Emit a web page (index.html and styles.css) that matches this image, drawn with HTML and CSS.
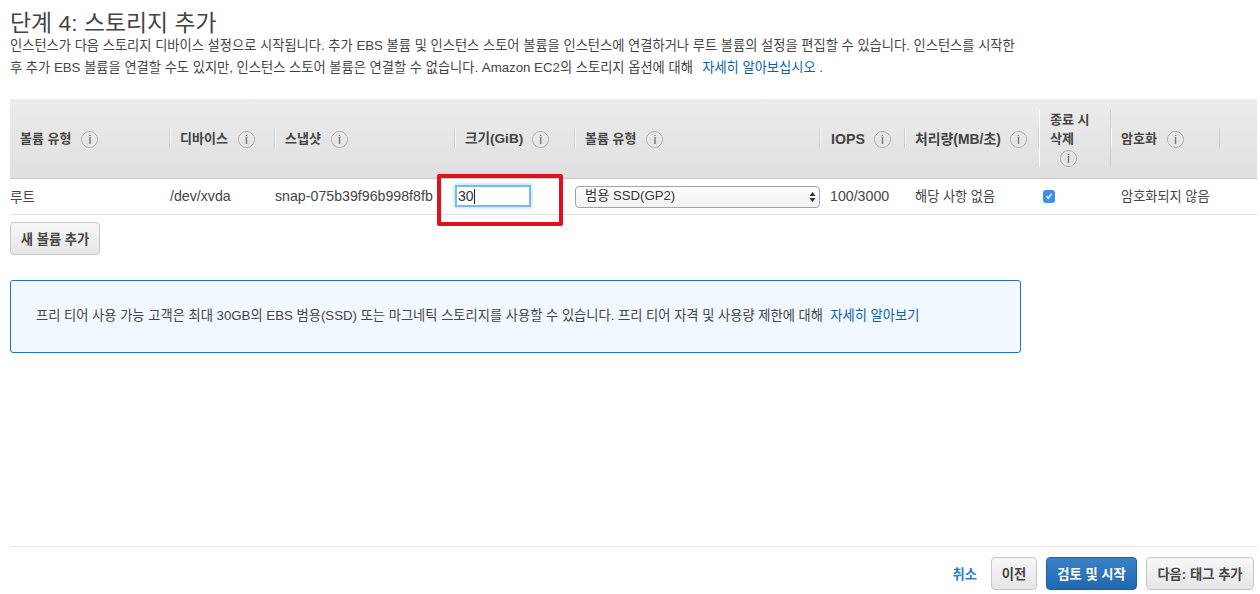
FILE: index.html
```html
<!DOCTYPE html>
<html lang="ko">
<head>
<meta charset="utf-8">
<title>단계 4: 스토리지 추가</title>
<link rel="stylesheet" href="styles.css">
</head>
<body>
<main class="page">
  <h1 class="title">단계 4: 스토리지 추가</h1>
  <p class="intro">인스턴스가 다음 스토리지 디바이스 설정으로 시작됩니다. 추가 EBS 볼륨 및 인스턴스 스토어 볼륨을 인스턴스에 연결하거나 루트 볼륨의 설정을 편집할 수 있습니다. 인스턴스를 시작한<br>후 추가 EBS 볼륨을 연결할 수도 있지만, 인스턴스 스토어 볼륨은 연결할 수 없습니다. Amazon EC2의 스토리지 옵션에 대해 &nbsp;<a class="intro-link" href="#">자세히 알아보십시오</a> .</p>

  <div class="table">
    <div class="thead">
      <div class="th c1"><span class="th-in">볼륨 유형<i class="info">i</i></span></div>
      <div class="th c2"><span class="th-in">디바이스<i class="info">i</i></span></div>
      <div class="th c3"><span class="th-in">스냅샷<i class="info">i</i></span></div>
      <div class="th c4"><span class="th-in">크기(GiB)<i class="info">i</i></span></div>
      <div class="th c5"><span class="th-in">볼륨 유형<i class="info">i</i></span></div>
      <div class="th c6"><span class="th-in">IOPS<i class="info">i</i></span></div>
      <div class="th c7"><span class="th-in">처리량(MB/초)<i class="info">i</i></span></div>
      <div class="th c8"><span class="th-in wrap">종료 시<br>삭제<br><i class="info center">i</i></span></div>
      <div class="th c9"><span class="th-in">암호화<i class="info">i</i></span></div>
      <div class="th c10"></div>
    </div>
    <div class="tr">
      <div class="td c1 root lift">루트</div>
      <div class="td c2 mono lift">/dev/xvda</div>
      <div class="td c3 mono lift">snap-075b39f96b998f8fb</div>
      <div class="td c4 size-cell">
        <div class="size-input">30<span class="caret"></span></div>
        <div class="highlight"></div>
      </div>
      <div class="td c5">
        <div class="select">범용 SSD(GP2)
          <svg class="updown" width="7" height="12" viewBox="0 0 7 12"><path d="M3.5 1 6.5 5H.5zM3.5 11 .5 7h6z" fill="#333"/></svg>
        </div>
      </div>
      <div class="td c6 mono lift">100/3000</div>
      <div class="td c7 lift">해당 사항 없음</div>
      <div class="td c8">
        <span class="check"><svg width="12" height="12" viewBox="0 0 12 12"><path d="M3.4 6.2 5.2 8.4 8.6 3.6" fill="none" stroke="#fff" stroke-width="1.3"/></svg></span>
      </div>
      <div class="td c9 lift">암호화되지 않음</div>
      <div class="td c10"></div>
    </div>
  </div>

  <button class="btn add" type="button">새 볼륨 추가</button>

  <div class="notice">프리 티어 사용 가능 고객은 최대 30GB의 EBS 범용(SSD) 또는 마그네틱 스토리지를 사용할 수 있습니다. 프리 티어 자격 및 사용량 제한에 대해 &nbsp;<a href="#">자세히 알아보기</a></div>

  <footer class="footer">
    <a class="cancel" href="#">취소</a>
    <button class="btn prev" type="button">이전</button>
    <button class="btn primary" type="button">검토 및 시작</button>
    <button class="btn next" type="button">다음: 태그 추가</button>
  </footer>
</main>
</body>
</html>
```
FILE: styles.css
```css
html, body { margin: 0; padding: 0; background: #fff; }
body {
  font-family: "Liberation Sans", "Noto Sans CJK KR", sans-serif;
  font-size: 13px;
  color: #444;
  overflow: hidden;
  height: 594px;
}
a { color: #0b5fa8; text-decoration: none; }
.page { width: 1247px; margin-left: 10px; margin-right: 3px; }
.title {
  margin: 0;
  padding-top: 10px;
  height: 25px;
  line-height: 27px;
  font-size: 22.9px;
  font-weight: 400;
  color: #444;
}
.intro {
  margin: 0;
  width: 1020px;
  height: 64px;
  font-size: 13.26px;
  line-height: 22px;
  color: #444;
  white-space: nowrap;
}
.intro-link { margin-left: 2px; }
.table { width: 1247px; }
.thead {
  display: flex;
  height: 79px;
  background: linear-gradient(#ececec, #dfdfdf);
  border-bottom: 1px solid #c9c9c9;
}
.tr {
  display: flex;
  height: 35px;
  border-bottom: 1px solid #e1e1e1;
  align-items: center;
}
.c1 { width: 160px; }
.c2 { width: 105px; }
.c3 { width: 180px; }
.c4 { width: 120px; }
.c5 { width: 245px; }
.c6 { width: 85px; }
.c7 { width: 134px; }
.c8 { width: 72px; }
.c9 { width: 109px; }
.c10 { width: 37px; }
.th {
  box-sizing: border-box;
  display: flex;
  align-items: center;
  font-size: 13px;
  font-weight: 700;
  color: #444;
  position: relative;
  white-space: nowrap;
  padding-left: 10px;
  padding-top: 1px;
}
.th-in { display: flex; align-items: center; line-height: 20px; }
.th-in.wrap { display: block; line-height: 19px; }
.th::after {
  content: "";
  position: absolute;
  right: 0;
  top: 29px;
  height: 20px;
  width: 1px;
  background: #cfcfcf;
  box-shadow: 1px 0 0 #f6f6f6;
}
.th.c4 { font-size: 13.6px; }
.th.c7 { font-size: 13.9px; }
.th.c6 { font-size: 14.2px; padding-left: 11px; }
.c7.th::after { box-shadow: none; }
.c8.th { padding-left: 11px; padding-top: 0; }
.c8.th::before {
  content: "";
  position: absolute;
  left: 0;
  top: 11px;
  height: 57px;
  width: 1px;
  background: #fbfbfb;
}
.c8.th::after { top: 11px; height: 57px; box-shadow: none; }
.c9.th::before {
  content: "";
  position: absolute;
  left: 0;
  top: 29px;
  height: 20px;
  width: 1px;
  background: #fbfbfb;
}
.c9.th::after { box-shadow: none; }
.c10.th::after { display: none; }
.info {
  box-sizing: border-box;
  display: inline-block;
  width: 17px;
  height: 17px;
  margin-left: 10px;
  border: 1px solid #a9a9a9;
  border-radius: 50%;
  font: 400 13px/15px "Liberation Sans", sans-serif;
  color: #666;
  text-align: center;
  box-shadow: inset 0 0 0 1px #f2f2f2;
}
.th.c6 .info, .th.c7 .info, .th.c4 .info { margin-left: 9px; }
.info.center { margin-left: 10px; vertical-align: middle; }
.td {
  box-sizing: border-box;
  font-size: 13.2px;
  color: #444;
  white-space: nowrap;
}
.td.lift { padding-bottom: 2px; }
.td.mono { font-size: 14.2px; }
.td.root { font-size: 13.5px; }
.td.c7, .td.c6, .td.c9 { padding-left: 10px; }
.td.c8 { padding-left: 4px; }
.size-cell { position: relative; height: 35px; }
.size-input {
  box-sizing: border-box;
  margin-top: 6px;
  width: 76px;
  height: 22px;
  border: 2px solid #7db8ee;
  box-shadow: 0 0 3px 1px #bcdcf9;
  padding-left: 1px;
  font-size: 14px;
  color: #333;
  display: flex;
  align-items: center;
}
.caret { width: 1px; height: 15px; background: #222; }
.highlight {
  position: absolute;
  left: -18px;
  top: -5px;
  width: 126px;
  height: 52px;
  box-sizing: border-box;
  border: 4px solid #e0101d;
  border-radius: 2px;
}
.select {
  box-sizing: border-box;
  position: relative;
  width: 245px;
  height: 22px;
  padding-left: 9px;
  line-height: 18px;
  font-size: 13.2px;
  border: 1px solid #a3a3a3;
  border-radius: 4px;
  background: linear-gradient(#fcfcfc, #f3f3f3);
  color: #333;
}
.updown { position: absolute; right: 3px; top: 4px; }
.check {
  display: block;
  width: 12px;
  height: 13px;
  border-radius: 3px;
  background: #3e8ef0;
}
.check svg { display: block; }
.btn {
  box-sizing: border-box;
  font-family: inherit;
  font-size: 13.3px;
  font-weight: 700;
  color: #444;
  height: 33px;
  border: 1px solid #c6c6c6;
  border-radius: 4px;
  background: linear-gradient(#f7f7f7, #e6e6e6);
  padding: 0;
}
.add { display: block; width: 90px; margin-top: 7px; }
.notice {
  box-sizing: border-box;
  margin-top: 25px;
  width: 1011px;
  height: 73px;
  border: 1px solid #1f73c0;
  border-radius: 3px;
  background: #f1f8ff;
  padding-left: 25px;
  line-height: 69px;
  font-size: 13.25px;
  color: #444;
  white-space: nowrap;
}
.footer {
  margin-top: 193px;
  padding: 10px 3px 0 0;
  border-top: 1px solid #e6e6e6;
  display: flex;
  justify-content: flex-end;
  align-items: center;
  gap: 9px;
}
.cancel { font-size: 13.3px; font-weight: 700; color: #2f7fc9; margin-right: 5px; }
.prev { width: 46px; }
.primary {
  width: 91px;
  color: #fff;
  border-color: #1d5fa5;
  background: linear-gradient(#3b83c7, #1f67b0);
}
.next { width: 108px; }
```
